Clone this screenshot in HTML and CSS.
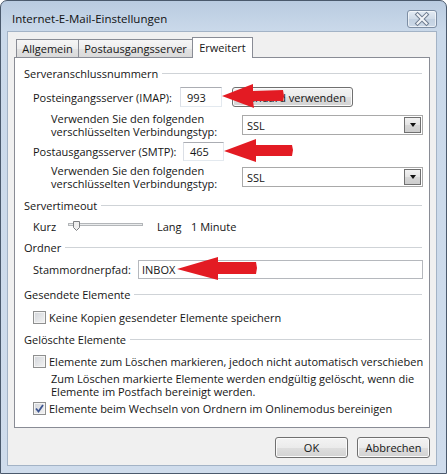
FILE: index.html
```html
<!DOCTYPE html>
<html lang="de">
<head>
<meta charset="utf-8">
<title>Internet-E-Mail-Einstellungen</title>
<link rel="stylesheet" href="styles.css">
</head>
<body>
<div class="window">
  <div class="titlebar">
    <span class="title">Internet-E-Mail-Einstellungen</span>
    <div class="close">
      <svg width="30" height="18" viewBox="0 0 30 18">
        <path d="M10.5 4.5 L19.5 13.5 M19.5 4.5 L10.5 13.5" stroke="#6f7d90" stroke-width="4" stroke-linecap="square" fill="none"/>
        <path d="M10.5 4.5 L19.5 13.5 M19.5 4.5 L10.5 13.5" stroke="#f3f5f8" stroke-width="2" stroke-linecap="square" fill="none"/>
      </svg>
    </div>
  </div>
  <div class="client">
    <div class="tabs">
      <div class="tab t1">Allgemein</div>
      <div class="tab t2">Postausgangsserver</div>
      <div class="tab t3 active">Erweitert</div>
    </div>
    <div class="panel">
      <div class="group-head g1"><span>Serveranschlussnummern</span><i class="line"></i></div>
      <div class="row r-imap">
        <span class="lbl w-imap">Posteingangsserver (IMAP):</span>
        <div class="field port">993</div>
        <div class="btn std">Standard verwenden</div>
      </div>
      <div class="row enc e1">
        <span class="enc-lbl">Verwenden Sie den folgenden<br>verschlüsselten Verbindungstyp:</span>
        <div class="select"><span>SSL</span><span class="dd"><i class="tri"></i></span></div>
      </div>
      <div class="row r-smtp">
        <span class="lbl w-smtp">Postausgangsserver (SMTP):</span>
        <div class="field port2">465</div>
      </div>
      <div class="row enc e2">
        <span class="enc-lbl">Verwenden Sie den folgenden<br>verschlüsselten Verbindungstyp:</span>
        <div class="select"><span>SSL</span><span class="dd"><i class="tri"></i></span></div>
      </div>
      <div class="group-head g2"><span>Servertimeout</span><i class="line"></i></div>
      <div class="row r-slider">
        <span class="kurz">Kurz</span>
        <span class="slider">
          <svg width="80" height="16" viewBox="0 0 80 16">
            <rect x="2.5" y="5.5" width="74" height="2" fill="#e9ebec" stroke="#b3b6b9"/>
            <path d="M7.5 3.5 H13.5 V9.5 L10.5 12.5 L7.5 9.5 Z" fill="#eeeeee" stroke="#7d7f82"/>
          </svg>
        </span>
        <span class="lang">Lang</span>
        <span>1 Minute</span>
      </div>
      <div class="group-head g3"><span>Ordner</span><i class="line"></i></div>
      <div class="row r-stamm">
        <span class="lbl w-stamm">Stammordnerpfad:</span>
        <div class="field path">INBOX</div>
      </div>
      <div class="group-head g4"><span>Gesendete Elemente</span><i class="line"></i></div>
      <div class="row cb-row c1">
        <span class="cb"></span>
        <span class="cb-lbl">Keine Kopien gesendeter Elemente speichern</span>
      </div>
      <div class="group-head g5"><span>Gelöschte Elemente</span><i class="line"></i></div>
      <div class="row cb-row c2">
        <span class="cb"></span>
        <span class="cb-lbl">Elemente zum Löschen markieren, jedoch nicht automatisch verschieben</span>
      </div>
      <div class="desc">Zum Löschen markierte Elemente werden endgültig gelöscht, wenn die<br>Elemente im Postfach bereinigt werden.</div>
      <div class="row cb-row c3">
        <span class="cb checked">
          <svg width="9" height="9" viewBox="0 0 9 9"><path d="M1 4.5 L3.5 7.5 L8 1" stroke="#3d5591" stroke-width="1.8" fill="none"/></svg>
        </span>
        <span class="cb-lbl">Elemente beim Wechseln von Ordnern im Onlinemodus bereinigen</span>
      </div>
    </div>
    <div class="footer">
      <div class="btn ok">OK</div>
      <div class="btn cancel">Abbrechen</div>
    </div>
  </div>
  <svg class="arrows" width="447" height="474" viewBox="0 0 447 474">
    <polygon points="222,96 253,84 253,91 283,90 284,96 283,101 253,101 254,108" fill="#e31b23"/>
    <polygon points="224,151 256,139 256,145 292,145 293,150 292,156 256,156 256,162" fill="#e31b23"/>
    <polygon points="177,269 218,257 218,262 256,262 257,268 256,274 218,274 218,280" fill="#e31b23"/>
  </svg>
</div>
</body>
</html>
```
FILE: styles.css
```css
* { box-sizing: border-box; }
html, body { margin: 0; padding: 0; background: #ffffff; }
body {
  font-family: "Open Sans", "Noto Sans", sans-serif;
  font-size: 11px;
  color: #151515;
}
.window {
  position: relative;
  width: 447px;
  height: 474px;
  border: 1px solid #4a596c;
  border-radius: 7px 7px 0 0;
  background: linear-gradient(#b9cbe0 0, #cad9ea 30px, #cfdcec 100%);
  padding: 0 9px 7px 6px;
  display: flex;
  flex-direction: column;
}
.titlebar {
  height: 30px;
  flex-shrink: 0;
  display: flex;
  justify-content: space-between;
  align-items: flex-start;
}
.title {
  margin: 10px 0 0 5px;
  font-size: 11.5px;
  line-height: 16px;
  color: #111;
}
.close {
  margin-top: 9px;
  width: 30px;
  height: 18px;
  border: 1px solid #7d8ea4;
  border-radius: 3px;
  background: linear-gradient(#e3ebf4, #cfdbe8 50%, #c3d1e1 51%, #ccd9e8);
  box-shadow: inset 0 0 0 1px rgba(255,255,255,0.6);
  display: flex;
  align-items: center;
  justify-content: center;
}
.close svg { display: block; margin: -1px; }
.client {
  flex: 1;
  border: 1px solid #a3b3c6;
  background: #f0f0f0;
  padding: 5px 6px 0 6px;
  display: flex;
  flex-direction: column;
}
.tabs {
  height: 20px;
  display: flex;
  align-items: flex-end;
  padding-left: 2px;
  position: relative;
  z-index: 2;
}
.tab {
  height: 18px;
  border: 1px solid #898c95;
  border-bottom: none;
  background: linear-gradient(#f6f6f6, #ededed 50%, #e2e2e2 51%, #dadada);
  display: flex;
  align-items: center;
  justify-content: center;
  line-height: 14px;
}
.t1 { width: 63px; }
.t2 { width: 115px; margin-left: -1px; }
.t3 { width: 61px; margin-left: -1px; }
.tab.active {
  height: 21px;
  margin-bottom: -1px;
  background: #ffffff;
  padding-bottom: 1px;
}
.panel {
  height: 371px;
  border: 1px solid #898c95;
  background: #ffffff;
  padding: 0 6px 0 9px;
  display: flex;
  flex-direction: column;
}
.group-head {
  height: 16px;
  display: flex;
  align-items: center;
}
.group-head .line {
  flex: 1;
  height: 1px;
  margin-left: 4px;
  margin-right: 1px;
  background: #cfd3d7;
}
.g1 { margin-top: 7px; }
.g2 { margin-top: 7px; }
.g3 { margin-top: 5px; }
.g4 { margin-top: 7px; }
.g5 { margin-top: 6px; }
.row {
  display: flex;
  align-items: center;
  margin-left: 9px;
}
.lbl { flex-shrink: 0; }
.w-imap { width: 147px; }
.w-smtp { width: 150px; }
.w-stamm { width: 105px; }
.r-imap { height: 20px; margin-top: 6px; }
.r-smtp { height: 19px; margin-top: 4px; }
.r-stamm { height: 19px; margin-top: 5px; }
.field {
  height: 100%;
  border: 1px solid #dbdfe6;
  border-top-color: #abadb3;
  border-right-color: #e3e9ef;
  border-bottom-color: #e3e9ef;
  background: #ffffff;
  display: flex;
  align-items: center;
  padding-left: 6px;
}
.port { width: 42px; }
.port2 { width: 41px; }
.path { flex: 1; padding-left: 3px; border-color: #b5b8bd; }
.btn {
  border: 1px solid #707070;
  border-radius: 3px;
  background: linear-gradient(#f3f3f3, #ebebeb 50%, #dedede 51%, #d2d2d2);
  box-shadow: inset 0 0 0 1px #fbfbfb;
  display: flex;
  align-items: center;
  justify-content: center;
}
.std { width: 121px; height: 20px; margin-left: 10px; }
.enc { height: 26px; padding-left: 18px; }
.e1 { margin-top: 5px; }
.e2 { margin-top: 3px; }
.enc-lbl { width: 191px; line-height: 13px; flex-shrink: 0; }
.select {
  width: 181px;
  height: 20px;
  border: 1px solid #a9a9a9;
  background: #ffffff;
  display: flex;
  align-items: center;
  padding-left: 4px;
}
.dd {
  margin-left: auto;
  margin-right: 1px;
  width: 17px;
  height: 16px;
  border: 1px solid #707070;
  background: linear-gradient(#f2f2f2, #e4e4e4 50%, #d6d6d6 51%, #cdcdcd);
  display: flex;
  align-items: center;
  justify-content: center;
}
.tri {
  display: block;
  width: 0;
  height: 0;
  border-left: 3.5px solid transparent;
  border-right: 3.5px solid transparent;
  border-top: 4px solid #111;
}
.r-slider { height: 16px; margin-top: 5px; }
.kurz { width: 33px; }
.slider { width: 91px; height: 16px; }
.slider svg { display: block; }
.lang { width: 34px; }
.cb-row { height: 16px; }
.c1 { margin-top: 7px; }
.c2 { margin-top: 6px; }
.c3 { margin-top: 2px; }
.cb {
  width: 13px;
  height: 13px;
  flex-shrink: 0;
  border: 1px solid #8e8f8f;
  background: linear-gradient(135deg, #d2d5da, #f3f3f3);
  box-shadow: inset 0 0 0 1px #f4f4f4;
  display: flex;
  align-items: center;
  justify-content: center;
}
.cb svg { display: block; }
.cb-lbl { margin-left: 3px; white-space: nowrap; }
.desc {
  margin: 3px 0 0 27px;
  line-height: 13px;
  height: 26px;
}
.footer {
  margin-top: 9px;
  display: flex;
  justify-content: flex-end;
  gap: 9px;
}
.footer .btn { width: 73px; height: 21px; }
.arrows {
  position: absolute;
  left: -1px;
  top: -1px;
  pointer-events: none;
}
```
